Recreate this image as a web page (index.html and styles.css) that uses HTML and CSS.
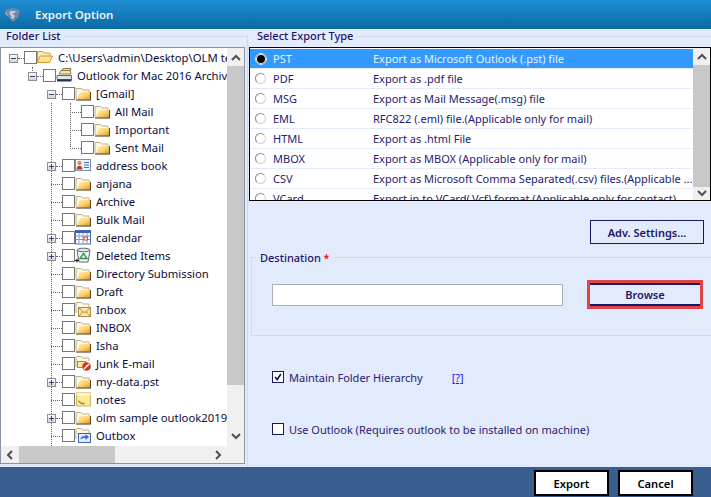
FILE: index.html
```html
<!DOCTYPE html>
<html lang="en">
<head>
<meta charset="utf-8">
<title>Export Option</title>
<link rel="stylesheet" href="styles.css">
</head>
<body>
<svg class="defs" width="0" height="0" aria-hidden="true">
  <defs>
    <linearGradient id="fy" x1="0" y1="0" x2="1" y2="1"><stop offset="0" stop-color="#fff3c4"/><stop offset=".55" stop-color="#fbcf6a"/><stop offset="1" stop-color="#d98f1f"/></linearGradient>
    <symbol id="folder" viewBox="0 0 16 16">
      <path d="M1 14V3.500h5.500l1.500 1.500h6v2" fill="#fdf8e4" stroke="#b9b08a"/>
      <path d="M2 14.500 5 7h10.500v7.500z" fill="url(#fy)"/>
      <path d="M1 15h15" stroke="#3a2c10"/>
      <path d="M15.500 7v8" stroke="#5b4518"/>
    </symbol>
    <symbol id="openfolder" viewBox="0 0 16 16">
      <path d="M.5 13.500V2.500h5l1.500 1.500h6v3" fill="#fdebb2" stroke="#d99a26"/>
      <path d="M.5 13.500 3 7h12.500l-3 6.500z" fill="#fde39a" stroke="#d99a26"/>
    </symbol>
    <symbol id="pst" viewBox="0 0 16 16">
      <path d="M5 5 7 1.500h8l-1 4z" fill="#f6d98a" stroke="#8c7a45"/>
      <path d="M3 7 5 3.500h9l1 3.500z" fill="#fbe7ad" stroke="#8c7a45"/>
      <path d="M1 8.500h14.500v4H1z" fill="#dfe6f2" stroke="#56698f"/>
      <path d="M1 12.500h14.500v2H1z" fill="#26324f"/>
    </symbol>
    <symbol id="addr" viewBox="0 0 16 16">
      <rect x=".5" y="2.500" width="15" height="11" fill="#eef3fb" stroke="#7a8fb5"/>
      <circle cx="4.500" cy="6" r="2" fill="#d9853a"/>
      <path d="M1.500 12.500c0-5 6-5 6 0z" fill="#a8431f"/>
      <path d="M9 5.500h5M9 8h5M9 10.500h5" stroke="#4a6fb8"/>
    </symbol>
    <symbol id="cal" viewBox="0 0 16 16">
      <rect x=".5" y="1.500" width="15" height="13.500" fill="#fff" stroke="#4a6fb8"/>
      <path d="M.5 1.500h15v2.500H.5z" fill="#3f63b0"/>
      <path d="M4 4v11M8 4v11M12 4v11M1 7h14M1 10.500h14" stroke="#7e9ad3"/>
      <rect x="9" y="8" width="3.500" height="3" fill="#fff" stroke="#e0431f"/>
    </symbol>
    <symbol id="trash" viewBox="0 0 16 16">
      <path d="M2 3.500 4 15h9l2-11.500z" fill="#f4f6f6" stroke="#5f6b6b"/>
      <ellipse cx="8.500" cy="3" rx="6.500" ry="1.800" fill="#dfe5e5" stroke="#5f6b6b"/>
      <path d="M8.500 6.500 12 11.500H5z" fill="none" stroke="#2f9a4a" stroke-width="1.400"/>
      <path d="M2 11.500v4M0 13.500h4" stroke="#111"/>
    </symbol>
    <symbol id="mailfolder" viewBox="0 0 16 16">
      <path d="M1 12V1.500h5.500l1.500 1.500h6v3" fill="#fdf8e4" stroke="#b9b08a"/>
      <rect x="3.500" y="6.500" width="12" height="9" fill="#fde7a6" stroke="#b08a3a"/>
      <path d="M3.500 6.500 9.500 12l6-5.500M3.500 15.500 8 10.500M15.500 15.500 11 10.500" fill="none" stroke="#b08a3a"/>
    </symbol>
    <symbol id="junk" viewBox="0 0 16 16">
      <path d="M1 12V1.500h5.500l1.500 1.500h6v3" fill="#fdf8e4" stroke="#b9b08a"/>
      <rect x="2.500" y="6.500" width="8" height="6" fill="#fde7a6" stroke="#b08a3a"/>
      <circle cx="11.500" cy="11.500" r="4.300" fill="#d8321c"/>
      <path d="m9 14 5-5" stroke="#fff" stroke-width="1.500"/>
    </symbol>
    <symbol id="note" viewBox="0 0 16 16">
      <rect x="1.500" y="1.500" width="14" height="13.500" fill="#fde99a" stroke="#c9b264"/>
      <path d="M1.500 1.500h14V5h-14z" fill="#fff5c6"/>
      <path d="m3.500 10 3 2.500h3" fill="none" stroke="#b08214" stroke-width="1.500"/>
    </symbol>
    <symbol id="outbox" viewBox="0 0 16 16">
      <path d="M1 12V1.500h5.500l1.500 1.500h6v3" fill="#fdf8e4" stroke="#b9b08a"/>
      <rect x="3.500" y="6.500" width="12" height="9" fill="#e3ebfa" stroke="#3f63b0"/>
      <path d="M5.500 12.500c0-3 2-3.500 5-3.500V7l3.500 3-3.500 3v-2c-2 0-3.500 0-5 1.500z" fill="#3f70d0"/>
    </symbol>
    <symbol id="up" viewBox="0 0 16 16"><path d="m4 10 4-4 4 4" fill="none" stroke="#505050" stroke-width="2"/></symbol>
    <symbol id="down" viewBox="0 0 16 16"><path d="m4 6 4 4 4-4" fill="none" stroke="#505050" stroke-width="2"/></symbol>
    <symbol id="left" viewBox="0 0 16 16"><path d="m10 4-4 4 4 4" fill="none" stroke="#505050" stroke-width="2"/></symbol>
    <symbol id="right" viewBox="0 0 16 16"><path d="m6 4 4 4-4 4" fill="none" stroke="#505050" stroke-width="2"/></symbol>
  </defs>
</svg>

<div class="window">
  <header class="titlebar">
    <svg class="appicon" viewBox="0 0 16 16"><path d="M1 3 8 1l7 2-1.500 7L8 15l-4.500-5z" fill="#6f87a8"/><path d="M5 4h6L9.500 6H7l3 3-2 3-3-1 2-1-2.500-3z" fill="#c3cfdf"/><path d="M1 3 3.500 10 0 7z" fill="#9aa7b8"/></svg>
    <span class="titletext">Export Option</span>
  </header>

  <main class="content">
    <section class="leftcol">
      <div class="grouphead"><span class="grouptitle">Folder List</span><span class="groupline"></span></div>
      <div class="treebox">
        <div class="tree">
          <span class="guide g1"></span><span class="guide g2"></span><span class="guide g3"></span>
          <div class="row d0"><span class="exp"></span><span class="conn"></span><span class="cb"></span><svg class="ico"><use href="#openfolder"/></svg><span class="lbl">C:\Users\admin\Desktop\OLM test\Mac</span></div>
          <div class="row d1"><span class="exp"></span><span class="conn"></span><span class="cb"></span><svg class="ico"><use href="#pst"/></svg><span class="lbl">Outlook for Mac 2016 Archive.olm</span></div>
          <div class="row d2"><span class="exp"></span><span class="conn"></span><span class="cb"></span><svg class="ico"><use href="#folder"/></svg><span class="lbl">[Gmail]</span></div>
          <div class="row d3"><span class="conn long"></span><span class="cb"></span><svg class="ico"><use href="#folder"/></svg><span class="lbl">All Mail</span></div>
          <div class="row d3"><span class="conn long"></span><span class="cb"></span><svg class="ico"><use href="#folder"/></svg><span class="lbl">Important</span></div>
          <div class="row d3"><span class="conn long"></span><span class="cb"></span><svg class="ico"><use href="#folder"/></svg><span class="lbl">Sent Mail</span></div>
          <div class="row d2"><span class="exp plus"></span><span class="conn"></span><span class="cb"></span><svg class="ico"><use href="#addr"/></svg><span class="lbl">address book</span></div>
          <div class="row d2"><span class="conn long"></span><span class="cb"></span><svg class="ico"><use href="#folder"/></svg><span class="lbl">anjana</span></div>
          <div class="row d2"><span class="conn long"></span><span class="cb"></span><svg class="ico"><use href="#folder"/></svg><span class="lbl">Archive</span></div>
          <div class="row d2"><span class="conn long"></span><span class="cb"></span><svg class="ico"><use href="#folder"/></svg><span class="lbl">Bulk Mail</span></div>
          <div class="row d2"><span class="exp plus"></span><span class="conn"></span><span class="cb"></span><svg class="ico"><use href="#cal"/></svg><span class="lbl">calendar</span></div>
          <div class="row d2"><span class="exp plus"></span><span class="conn"></span><span class="cb"></span><svg class="ico"><use href="#trash"/></svg><span class="lbl">Deleted Items</span></div>
          <div class="row d2"><span class="conn long"></span><span class="cb"></span><svg class="ico"><use href="#folder"/></svg><span class="lbl">Directory Submission</span></div>
          <div class="row d2"><span class="conn long"></span><span class="cb"></span><svg class="ico"><use href="#folder"/></svg><span class="lbl">Draft</span></div>
          <div class="row d2"><span class="conn long"></span><span class="cb"></span><svg class="ico"><use href="#mailfolder"/></svg><span class="lbl">Inbox</span></div>
          <div class="row d2"><span class="conn long"></span><span class="cb"></span><svg class="ico"><use href="#folder"/></svg><span class="lbl">INBOX</span></div>
          <div class="row d2"><span class="conn long"></span><span class="cb"></span><svg class="ico"><use href="#folder"/></svg><span class="lbl">Isha</span></div>
          <div class="row d2"><span class="conn long"></span><span class="cb"></span><svg class="ico"><use href="#junk"/></svg><span class="lbl">Junk E-mail</span></div>
          <div class="row d2"><span class="exp plus"></span><span class="conn"></span><span class="cb"></span><svg class="ico"><use href="#folder"/></svg><span class="lbl">my-data.pst</span></div>
          <div class="row d2"><span class="conn long"></span><span class="cb"></span><svg class="ico"><use href="#note"/></svg><span class="lbl">notes</span></div>
          <div class="row d2"><span class="exp plus"></span><span class="conn"></span><span class="cb"></span><svg class="ico"><use href="#folder"/></svg><span class="lbl">olm sample outlook2019</span></div>
          <div class="row d2"><span class="conn long"></span><span class="cb"></span><svg class="ico"><use href="#outbox"/></svg><span class="lbl">Outbox</span></div>
        </div>
        <div class="vscroll tree-v">
          <svg class="arrow"><use href="#up"/></svg><span class="thumb"></span><svg class="arrow"><use href="#down"/></svg>
        </div>
        <div class="hscroll">
          <svg class="arrow"><use href="#left"/></svg><span class="hthumb"></span><svg class="arrow"><use href="#right"/></svg>
        </div>
      </div>
    </section>

    <section class="rightcol">
      <div class="grouphead rhead"><span class="grouptitle">Select Export Type</span><span class="groupline"></span></div>
      <div class="listbox">
        <div class="list">
          <div class="item selected"><span class="radio on"></span><span class="name">PST</span><span class="desc">Export as Microsoft Outlook (.pst) file</span></div>
          <div class="item"><span class="radio"></span><span class="name">PDF</span><span class="desc">Export as .pdf file</span></div>
          <div class="item"><span class="radio"></span><span class="name">MSG</span><span class="desc">Export as Mail Message(.msg) file</span></div>
          <div class="item"><span class="radio"></span><span class="name">EML</span><span class="desc">RFC822 (.eml) file.(Applicable only for mail)</span></div>
          <div class="item"><span class="radio"></span><span class="name">HTML</span><span class="desc">Export as .html File</span></div>
          <div class="item"><span class="radio"></span><span class="name">MBOX</span><span class="desc">Export as MBOX (Applicable only for mail)</span></div>
          <div class="item"><span class="radio"></span><span class="name">CSV</span><span class="desc">Export as Microsoft Comma Separated(.csv) files.(Applicable ...</span></div>
          <div class="item"><span class="radio"></span><span class="name">VCard</span><span class="desc">Export in to VCard(.Vcf) format (Applicable only for contact)</span></div>
        </div>
        <div class="vscroll list-v">
          <svg class="arrow"><use href="#up"/></svg><span class="thumb"></span><svg class="arrow"><use href="#down"/></svg>
        </div>
      </div>

      <div class="advrow"><button class="adv" type="button">Adv. Settings...</button></div>

      <div class="dest">
        <div class="destlegend">Destination <span class="req">*</span></div>
        <div class="destrow">
          <input class="path" type="text">
          <div class="browsewrap"><button class="browse" type="button">Browse</button></div>
        </div>
      </div>

      <div class="opt first"><span class="check on"><svg viewBox="0 0 12 12"><path d="M2.500 6 5 9l4.500-6.500" fill="none" stroke="#14145a" stroke-width="2"/></svg></span><span class="optlbl">Maintain Folder Hierarchy</span><a class="help" href="#">[?]</a></div>
      <div class="opt second"><span class="check"></span><span class="optlbl">Use Outlook (Requires outlook to be installed on machine)</span></div>
    </section>
  </main>

  <footer class="footer">
    <button class="fbtn" type="button">Export</button>
    <button class="fbtn" type="button">Cancel</button>
  </footer>
</div>
</body>
</html>
```

FILE: styles.css
```css
* { box-sizing: border-box; }
html, body { margin: 0; padding: 0; }
body {
  width: 711px;
  height: 497px;
  overflow: hidden;
  font-family: "Noto Sans", "Open Sans", sans-serif;
  font-size: 11px;
  color: #1c1668;
  background: #e2ebfc;
}
.defs { position: absolute; }
.window { display: flex; flex-direction: column; height: 497px; }

.titlebar {
  height: 29px;
  flex: none;
  display: flex;
  align-items: center;
  padding-left: 5px;
  background: linear-gradient(#1f8fd6, #0b69a1);
}
.appicon { width: 16px; height: 16px; }
.titletext { margin-left: 14px; color: #eaf3fa; font-weight: 600; font-size: 11.5px; }

.content { flex: 1; display: flex; min-height: 0; }

.leftcol { width: 247px; flex: none; }
.rightcol {
  flex: 1;
  min-width: 0;
  border-left: 1px solid #d4d9e2;
  margin-top: 7px;
}

.grouphead { height: 18px; display: flex; align-items: flex-start; }
.grouptitle {
  font-weight: 500;
  line-height: 14px;
  padding-left: 6px;
  color: #1c1668;
}
.groupline { flex: 1; height: 1px; margin: 7px 0 0 3px; background: #d4d9e2; }

.rhead { margin-top: -7px; }
.rhead .grouptitle { padding-left: 9px; }

.treebox {
  width: 245px;
  height: 417px;
  border: 1px solid #8a93a3;
  background: #fff;
  display: grid;
  grid-template-columns: 226px 17px;
  grid-template-rows: 398px 17px;
}
.tree { position: relative; overflow: hidden; grid-column: 1; grid-row: 1; }
.guide { position: absolute; border-left: 1px dotted #666; }
.g1 { left: 31px; top: 19px; height: 6px; }
.g2 { left: 50px; top: 55px; height: 345px; }
.g3 { left: 69px; top: 55px; height: 46px; }

.row { height: 18px; display: flex; align-items: center; white-space: nowrap; color: #0c0c3c; font-size: 11.3px; position: relative; }
.d0 { padding-left: 8px; }
.d1 { padding-left: 27px; }
.d2 { padding-left: 46px; }
.d3 { padding-left: 65px; }

.exp {
  width: 9px;
  height: 9px;
  flex: none;
  margin-top: 2px;
  border: 1px solid #8e8e8e;
  background: linear-gradient(#fafafa, #d4d4d4);
  position: relative;
}
.exp::before { content: ""; position: absolute; left: 1px; top: 3px; width: 5px; height: 1px; background: #33447f; }
.exp.plus::after { content: ""; position: absolute; left: 3px; top: 1px; width: 1px; height: 5px; background: #33447f; }
.conn { width: 6px; height: 0; flex: none; margin-top: 2px; border-top: 1px dotted #666; }
.conn.long { width: 11px; margin-left: 4px; }
.cb { width: 13px; height: 13px; flex: none; border: 1px solid #777; background: #fff; }
.ico { width: 16px; height: 16px; flex: none; }
.lbl { margin-left: 5px; }

.vscroll { background: #f0f0f0; display: flex; flex-direction: column; align-items: center; }
.tree-v { grid-column: 2; grid-row: 1; }
.arrow { width: 16px; height: 16px; flex: none; }
.thumb { width: 100%; flex: 1; background: #c8c8c8; }
.tree-v .arrow:first-child { margin: 2px 0 0; }
.tree-v .arrow:last-child { margin: 43px 0 0; }
.tree-v .thumb { flex: none; height: 319px; }

.hscroll {
  grid-column: 1 / span 2;
  grid-row: 2;
  background: #f0f0f0;
  display: flex;
  align-items: center;
  padding-left: 1px;
}
.hthumb { width: 96px; height: 100%; background: #c8c8c8; margin-left: 1px; margin-right: 95px; }

.listbox {
  margin: 0 0 0 1px;
  height: 154px;
  border: 1px solid #000;
  background: #fff;
  display: flex;
}
.list { flex: 1; min-width: 0; overflow: hidden; padding-top: 1px; }
.item {
  height: 20px;
  display: flex;
  align-items: center;
  border-bottom: 1px solid #e2ebfc;
  white-space: nowrap;
  font-size: 11px;
  color: #251a73;
}
.item.selected { background: #3399ff; color: #e8f2ff; }
.radio {
  width: 11px;
  height: 11px;
  flex: none;
  margin-left: 5px;
  border-radius: 50%;
  border: 1px solid #8a8a8a;
  border-right-color: #d2d2d2;
  border-bottom-color: #d2d2d2;
  background: #fff;
}
.radio.on { background: #000; box-shadow: inset 0 0 0 1px #fff; border-color: #d8e8fa; width: 12px; height: 12px; margin-right: -1px; }
.name { width: 100px; margin-left: 7px; flex: none; }
.desc { flex: none; }
.list-v { width: 17px; flex: none; }
.list-v .arrow:first-child { margin: 1px 0 0; }
.list-v .thumb { flex: none; height: 122px; }
.list-v .arrow:last-child { margin-top: -2px; }

.advrow { display: flex; justify-content: flex-end; margin: 19px 7px 0 0; }
.adv {
  width: 114px;
  height: 24px;
  border: 1px solid #1c1668;
  background: #e2ebfc;
  font: 600 11px "Noto Sans", sans-serif;
  color: #1c1668;
  padding: 0;
}

.dest {
  margin: 13px -1px 0 3px;
  height: 79px;
  border: 1px solid #d4d9e2;
  border-right: 0;
}
.destlegend {
  width: max-content;
  margin: -8px 0 0 4px;
  padding: 0 4px;
  line-height: 15px;
  font-weight: 500;
  background: #e2ebfc;
  color: #1c1668;
}
.req { color: #e8101e; font-weight: 700; font-size: 10px; }
.destrow { display: flex; align-items: center; gap: 24px; margin: 14px 0 0 20px; }
.path { width: 291px; height: 22px; border: 1px solid #a9aeb8; background: #fff; padding: 0; }
.browsewrap { width: 116px; height: 29px; border: 3px solid #e04444; display: flex; }
.browse {
  flex: 1;
  border: 0;
  border-top: 2px solid #1c1668;
  border-bottom: 2px solid #1c1668;
  background: #e2ebfc;
  font: 600 11px "Noto Sans", sans-serif;
  color: #1c1668;
  padding: 0;
}

.opt { display: flex; align-items: center; height: 14px; margin-left: 24px; color: #2a2070; }
.opt.first { margin-top: 34px; }
.opt.second { margin-top: 38px; }
.check { width: 12px; height: 12px; flex: none; border: 1px solid #1c1668; background: #fff; display: flex; }
.check svg { width: 10px; height: 10px; }
.optlbl { margin-left: 5px; }
.help { margin-left: 29px; color: #1a1aee; text-decoration: underline; }

.footer {
  height: 30px;
  flex: none;
  background: #3a5d8f;
  display: flex;
  justify-content: flex-end;
  gap: 9px;
  padding: 3px 18px 1px 0;
}
.fbtn {
  width: 75px;
  border: 2px solid #000;
  background: #fff;
  color: #000;
  font: 600 11.2px "Noto Sans", sans-serif;
  padding: 0;
}
```
